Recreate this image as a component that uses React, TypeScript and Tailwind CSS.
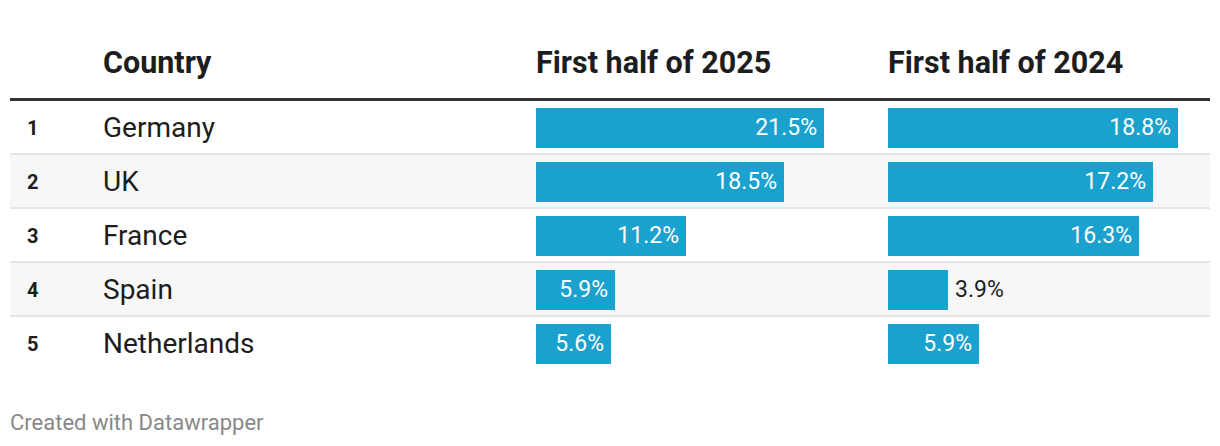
import React from "react";

type Row = { rank: number; country: string; v25: number; v24: number };

const rows: Row[] = [
  { rank: 1, country: "Germany", v25: 21.5, v24: 18.8 },
  { rank: 2, country: "UK", v25: 18.5, v24: 17.2 },
  { rank: 3, country: "France", v25: 11.2, v24: 16.3 },
  { rank: 4, country: "Spain", v25: 5.9, v24: 3.9 },
  { rank: 5, country: "Netherlands", v25: 5.6, v24: 5.9 },
];

function Bar({ value, max, width }: { value: number; max: number; width: number }) {
  const w = Math.round((value / max) * width);
  const inside = w > 70;
  return (
    <div className="flex items-center h-[40px]">
      <div
        className="h-[40px] bg-[#1ba1cd] flex items-center justify-end pr-[7px] text-white"
        style={{ width: w }}
      >
        {inside ? <span>{value.toFixed(1)}%</span> : null}
      </div>
      {!inside ? <span className="ml-[7px] text-[#1d1d1d]">{value.toFixed(1)}%</span> : null}
    </div>
  );
}

export default function App() {
  return (
    <div
      className="w-[1220px] h-[446px] bg-white text-[#1d1d1d] px-[10px]"
      style={{ fontFamily: "Roboto, 'Liberation Sans', sans-serif" }}
    >
      <div className="flex items-center h-[101px] pt-[28px] text-[30.5px] font-bold border-b-[3px] border-[#333333]">
        <div className="w-[93px]" />
        <div className="w-[433px]">Country</div>
        <div className="w-[352px]">First half of 2025</div>
        <div className="flex-1">First half of 2024</div>
      </div>
      {rows.map((r, i) => (
        <div
          key={r.rank}
          className={`flex h-[52px] box-content ${i % 2 === 1 ? "bg-[#f7f7f7]" : "bg-white"} ${
            i < rows.length - 1 ? "border-b-2 border-[#e6e6e6]" : ""
          }`}
        >
          <div className="w-[93px] pl-[17px] pt-[2px] flex items-center text-[20px] font-bold">{r.rank}</div>
          <div className="w-[433px] pt-[2px] flex items-center text-[28px]">{r.country}</div>
          <div className="w-[352px] pt-[7px] text-[23px]">
            <Bar value={r.v25} max={21.5} width={288} />
          </div>
          <div className="flex-1 pt-[7px] text-[23px]">
            <Bar value={r.v24} max={18.8} width={290} />
          </div>
        </div>
      ))}
      <div className="pt-[41px] text-[22px] leading-[26px] text-[#888888]">Created with Datawrapper</div>
    </div>
  );
}
